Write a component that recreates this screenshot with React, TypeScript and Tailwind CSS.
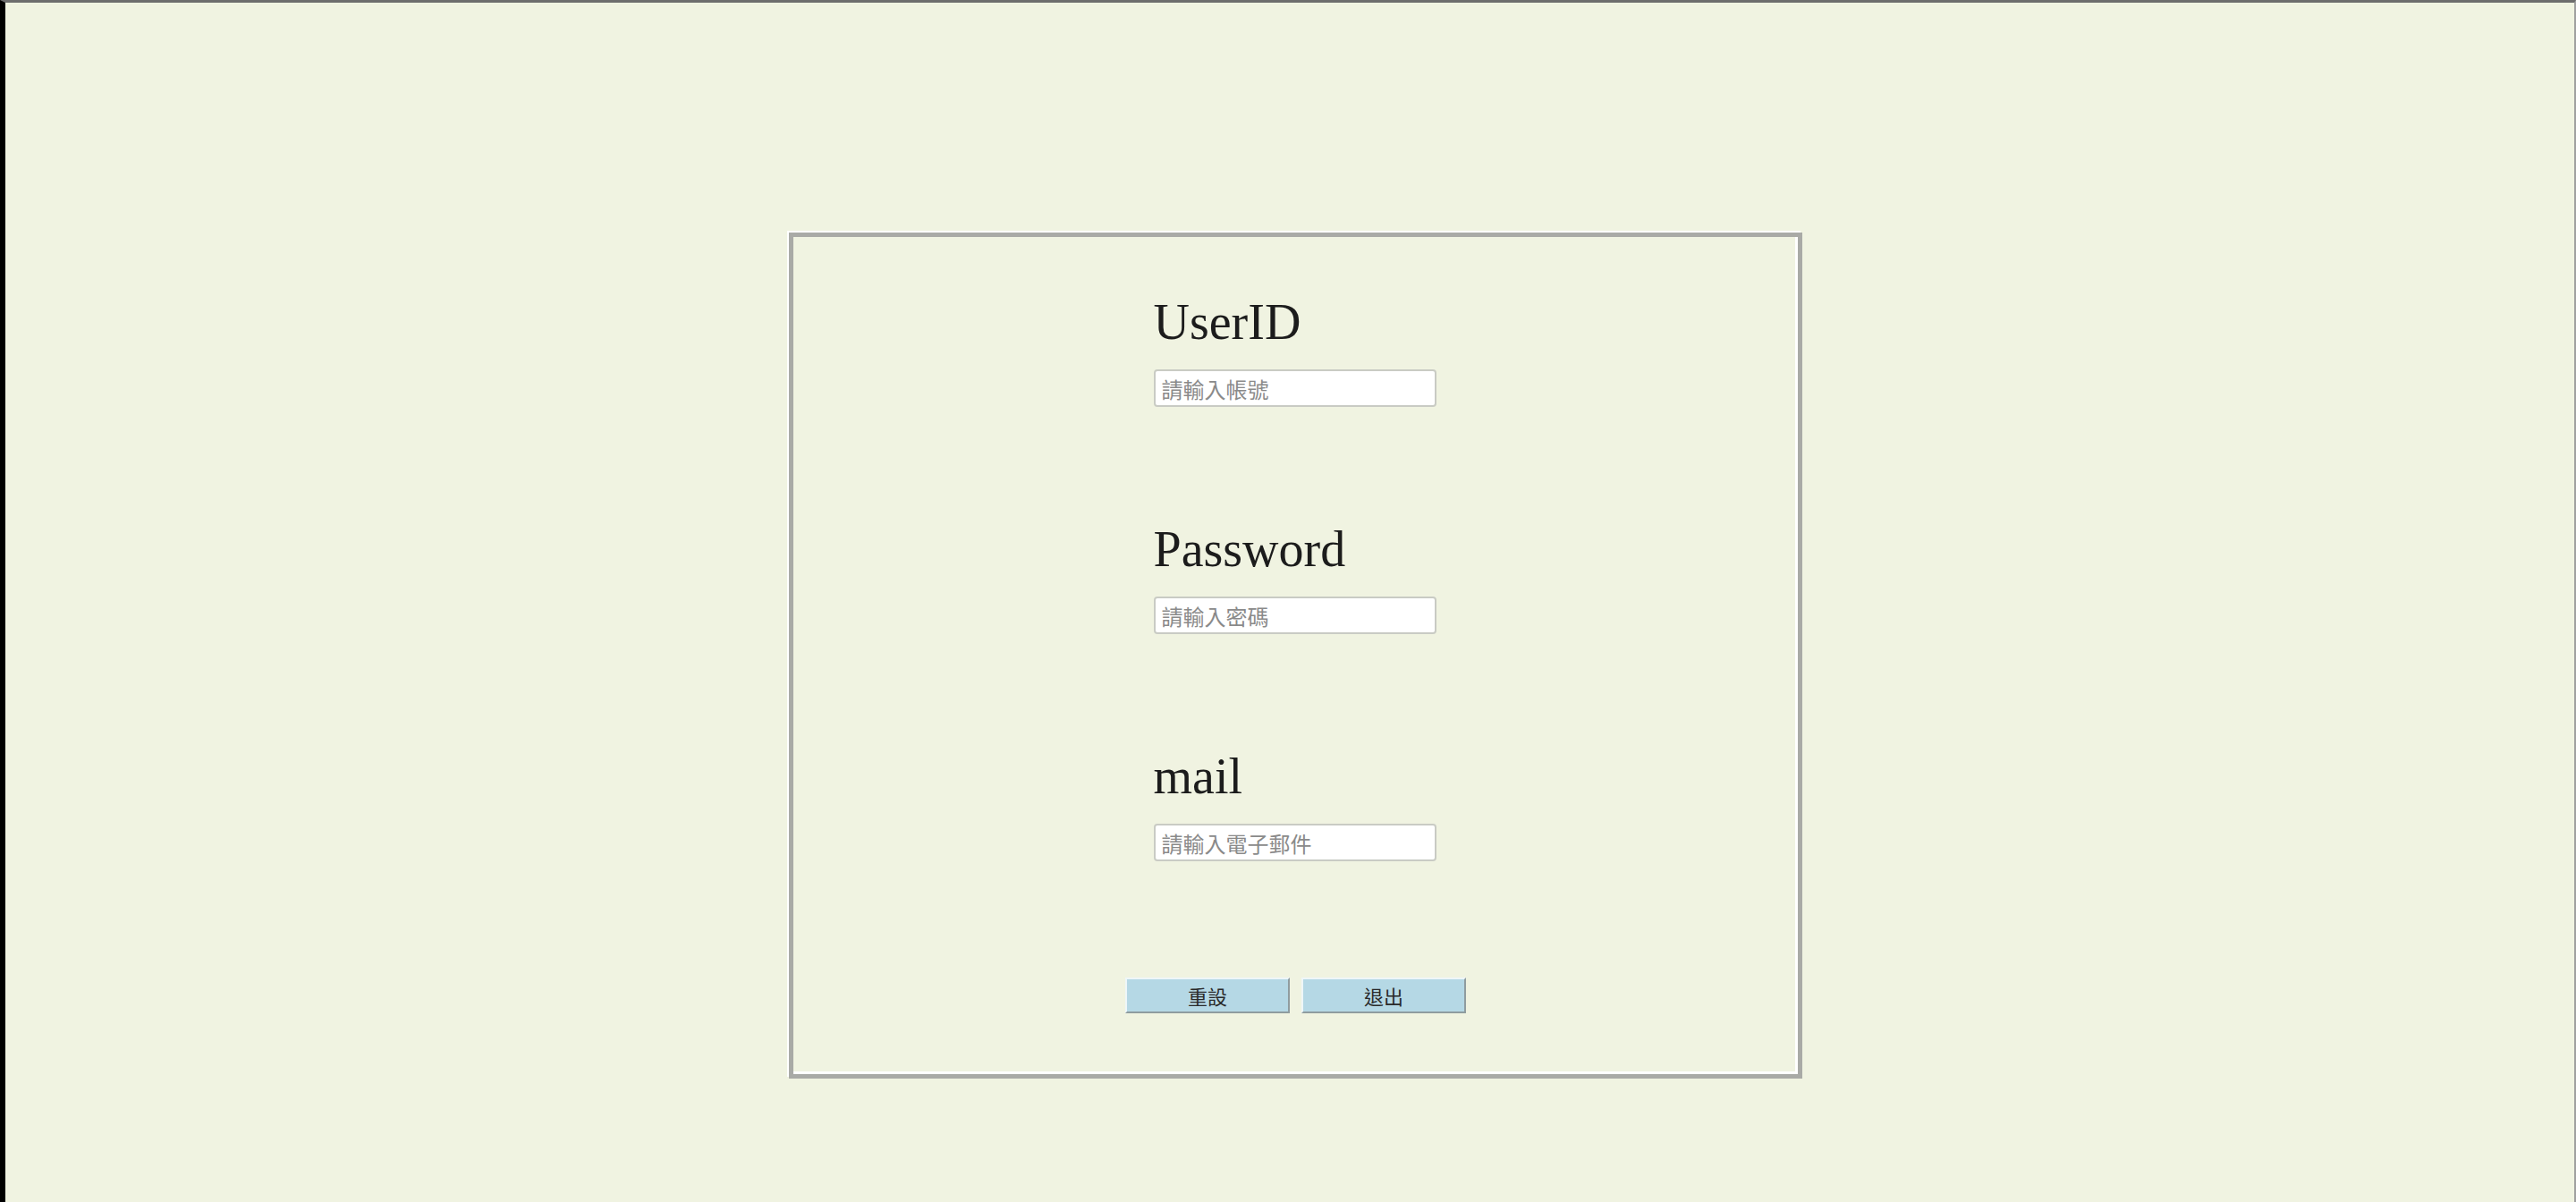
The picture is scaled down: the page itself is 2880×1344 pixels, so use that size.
const fields = [
  { label: "UserID", placeholder: "請輸入帳號", type: "text" },
  { label: "Password", placeholder: "請輸入密碼", type: "password" },
  { label: "mail", placeholder: "請輸入電子郵件", type: "email" },
];

const Field = ({ label, placeholder, type }: { label: string; placeholder: string; type: string }) => (
  <div className="flex flex-col w-[316px]">
    <label className="h-[55px] text-[56px] leading-[55px] text-[#1c1c1c] font-['Liberation_Serif',serif]">
      {label}
    </label>
    <input
      type={type}
      placeholder={placeholder}
      className="mt-[25px] h-[42px] w-[316px] bg-white border-2 border-[#c9cbc4] rounded-[4px] px-[7px] text-[24px] font-['Noto_Sans_CJK_TC',sans-serif] placeholder:text-[#8a8a8a] outline-none"
    />
  </div>
);

const Button = ({ children }: { children: string }) => (
  <button className="w-[184px] h-[40px] bg-[#b5d8e5] border-2 border-t-[#eef6f8] border-l-[#eef6f8] border-b-[#8f9c9f] border-r-[#8f9c9f] text-[22px] leading-none text-[#2a2a2a] font-['Noto_Sans_CJK_TC',sans-serif]">
    {children}
  </button>
);

export default function App() {
  return (
    <div className="h-screen w-full bg-[#f0f3e1] border-l-[6px] border-l-black border-t-[3px] border-t-[#6d6d6d] border-r-2 border-r-[#a0a0a0] flex justify-center pl-[13px] pt-[257px]">
      <div className="w-[1133px] h-[946px] border-[5px] border-[#a9aaa6] shadow-[-2px_-2px_0_#ffffff,inset_-3px_-3px_0_#ffffff] flex flex-col items-center pt-[68px]">
        <div className="flex flex-col gap-[132px] -ml-[2px]">
          {fields.map((f) => (
            <Field key={f.label} {...f} />
          ))}
        </div>
        <div className="flex gap-[13px] mt-[130px]">
          <Button>重設</Button>
          <Button>退出</Button>
        </div>
      </div>
    </div>
  );
}
